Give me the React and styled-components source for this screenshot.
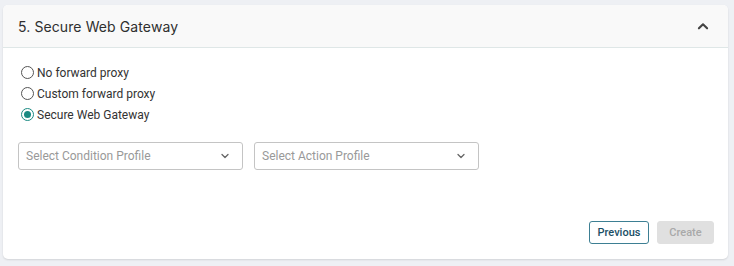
import React from 'react';
import styled, { createGlobalStyle } from 'styled-components';

const GlobalStyle = createGlobalStyle`
  body {
    margin: 0;
    background: #eef0f4;
    font-family: Roboto, "Liberation Sans", sans-serif;
  }
`;

const Page = styled.div`
  padding: 5px 6px 7px 3px;
`;

const Card = styled.div`
  background: #fff;
  border-radius: 5px;
  box-shadow: 0 1px 2px rgba(0, 0, 0, 0.12);
  overflow: hidden;
`;

const Header = styled.div`
  display: flex;
  align-items: center;
  justify-content: space-between;
  height: 42px;
  padding: 0 18px 0 15px;
  background: #f9f9f9;
  border-bottom: 1px solid #dfe7e7;
`;

const Title = styled.div`
  font-family: Inter, "Open Sans", sans-serif;
  font-size: 14px;
  color: #2f2f2f;
  letter-spacing: 0.1px;
`;

const Body = styled.div`
  padding: 18px 14px 15px 15px;
`;

const RadioGroup = styled.div`
  display: flex;
  flex-direction: column;
  gap: 8px;
  padding-left: 3px;
`;

const RadioRow = styled.label`
  display: flex;
  align-items: center;
  gap: 3px;
  font-size: 12px;
  color: #333;
  height: 13px;
`;

const RadioCircle = styled.span`
  width: 11px;
  height: 11px;
  border-radius: 50%;
  border: 1px solid ${p => (p.checked ? '#1a8a82' : '#555')};
  display: flex;
  align-items: center;
  justify-content: center;
  &::after {
    content: '';
    width: 7px;
    height: 7px;
    border-radius: 50%;
    background: ${p => (p.checked ? '#1a8a82' : 'transparent')};
  }
`;

const Selects = styled.div`
  display: flex;
  gap: 11px;
  margin-top: 21px;
`;

const Select = styled.div`
  width: 225px;
  height: 28px;
  box-sizing: border-box;
  border: 1px solid #c4c4c4;
  border-radius: 3px;
  display: flex;
  align-items: center;
  justify-content: space-between;
  padding: 0 11px 0 7px;
  font-size: 12px;
  color: #999;
`;

const Footer = styled.div`
  display: flex;
  justify-content: flex-end;
  gap: 8px;
  margin-top: 51px;
`;

const Button = styled.button`
  height: 23px;
  box-sizing: border-box;
  border-radius: 3px;
  font-family: Roboto, "Liberation Sans", sans-serif;
  font-size: 11px;
  font-weight: 500;
  padding: 0;
  width: ${p => p.w}px;
  border: 1px solid ${p => (p.disabled ? '#e0e0e0' : '#3d7f93')};
  background: ${p => (p.disabled ? '#e0e0e0' : '#fff')};
  color: ${p => (p.disabled ? '#a9a9a9' : '#1b4f66')};
`;

const Chevron = ({ up, color, size }) => (
  <svg width={size} height={size} viewBox="0 0 12 12" fill="none">
    <path
      d={up ? 'M2.5 8L6 4.5L9.5 8' : 'M3 4.5L6 7.5L9 4.5'}
      stroke={color}
      strokeWidth={up ? 1.8 : 1.3}
      strokeLinecap="round"
      strokeLinejoin="round"
    />
  </svg>
);

const options = ['No forward proxy', 'Custom forward proxy', 'Secure Web Gateway'];

export default function App() {
  return (
    <Page>
      <GlobalStyle />
      <Card>
        <Header>
          <Title>5. Secure Web Gateway</Title>
          <Chevron up color="#444" size={14} />
        </Header>
        <Body>
          <RadioGroup>
            {options.map((o, i) => (
              <RadioRow key={o}>
                <RadioCircle checked={i === 2} />
                {o}
              </RadioRow>
            ))}
          </RadioGroup>
          <Selects>
            <Select>
              Select Condition Profile
              <Chevron color="#666" size={12} />
            </Select>
            <Select>
              Select Action Profile
              <Chevron color="#666" size={12} />
            </Select>
          </Selects>
          <Footer>
            <Button w={60}>Previous</Button>
            <Button w={57} disabled>Create</Button>
          </Footer>
        </Body>
      </Card>
    </Page>
  );
}
